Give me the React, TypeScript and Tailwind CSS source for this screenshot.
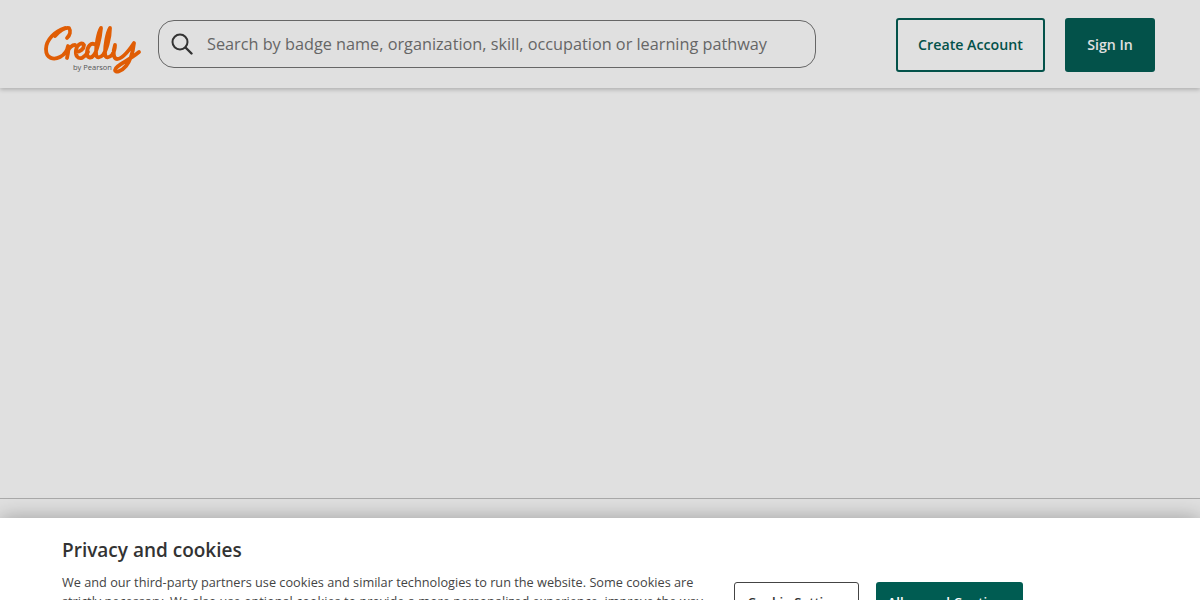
function Logo() {
  return (
    <svg width="98" height="50" viewBox="0 0 98 50" fill="none" className="mt-[11px] shrink-0" aria-label="Credly by Pearson">
      <g stroke="#e05d05" strokeWidth="3.8" strokeLinecap="round" strokeLinejoin="round">
        <path d="M11 11C15 6 21 2 25 3C27 6 26 10 23 13M21 3C11 6 2 15 2 24C2 34 10 35 16 32C20 30 23 27 24 21C25 25 24 29 23 33M24 26C25 23 28 20 31 20" />
        <path d="M32 27C36 27 40 24 40 20C38 17 33 19 32 25C31 31 34 34 38 33C40 32 42 30 44 27" />
        <path d="M52 20C47 16 43 22 43 28C43 33 47 34 50 30C53 26 56 14 57 3C54 8 52 20 52 28C52 34 56 33 59 30C62 26 66 14 66 3C63 8 61 20 61 28C61 34 65 33 68 30C70 27 71 24 71 20C69 26 69 34 73 34C78 34 84 27 90 18C89 27 86 36 82 41C77 47 71 48 71 45C71 41 84 36 95 27" />
      </g>
      <text x="29" y="44.5" fontFamily="'Open Sans', sans-serif" fontSize="7.5" fill="#555">by Pearson</text>
    </svg>
  );
}

function SearchIcon() {
  return (
    <svg width="22" height="22" viewBox="0 0 22 22" fill="none" stroke="#333" strokeWidth="2" strokeLinecap="round" className="shrink-0">
      <circle cx="9" cy="9" r="7.5" />
      <path d="M14.5 14.5L20.5 20.5" strokeWidth="2.4" />
    </svg>
  );
}

export default function App() {
  return (
    <div className="h-[600px] overflow-hidden bg-[#e0e0e0] font-['Open_Sans',sans-serif]">
      <header className="relative flex h-[88px] items-center bg-[#e0e0e0] pl-[44px] pr-[45px] shadow-[0_2px_4px_rgba(0,0,0,0.2)]">
        <Logo />
        <div className="ml-[16px] flex h-[48px] w-[658px] items-center rounded-[16px] border border-[#666] pl-[12px]">
          <SearchIcon />
          <span className="ml-[14px] text-[16.25px] text-[#666]">Search by badge name, organization, skill, occupation or learning pathway</span>
        </div>
        <button className="mt-[1px] ml-auto flex h-[54px] w-[149px] items-center justify-center rounded-[3px] border-2 border-[#03524a] text-[14.2px] font-semibold text-[#03524a]">Create Account</button>
        <button className="mt-[1px] ml-[20px] flex h-[54px] w-[90px] items-center justify-center rounded-[3px] bg-[#03524a] text-[14.2px] font-semibold text-[#e0e0e0]">Sign In</button>
      </header>
      <main className="h-[411px] border-b border-[#aaa]" />
      <div className="h-[19px]" />
      <section className="relative flex h-[200px] bg-white pl-[62px] pt-[19px] shadow-[0_0_20px_rgba(0,0,0,0.3)]">
        <div className="w-[650px] shrink-0">
          <h2 className="text-[19px] leading-[27px] font-semibold text-[#333]">Privacy and cookies</h2>
          <p className="mt-[9px] text-[12.72px] leading-[19px] text-[#444]">We and our third-party partners use cookies and similar technologies to run the website. Some cookies are strictly necessary. We also use optional cookies to provide a more personalized experience, improve the way our website works and support our marketing.</p>
        </div>
        <div className="ml-[22px] mt-[45px] flex items-start gap-[17px]">
          <button className="h-[42px] w-[125px] rounded-[3px] border border-[#444] bg-white text-[13.2px] font-semibold text-[#333]">Cookie Settings</button>
          <button className="h-[42px] w-[147px] rounded-[3px] bg-[#005c52] text-[13.2px] font-semibold text-white">Allow and Continue</button>
        </div>
      </section>
    </div>
  );
}
